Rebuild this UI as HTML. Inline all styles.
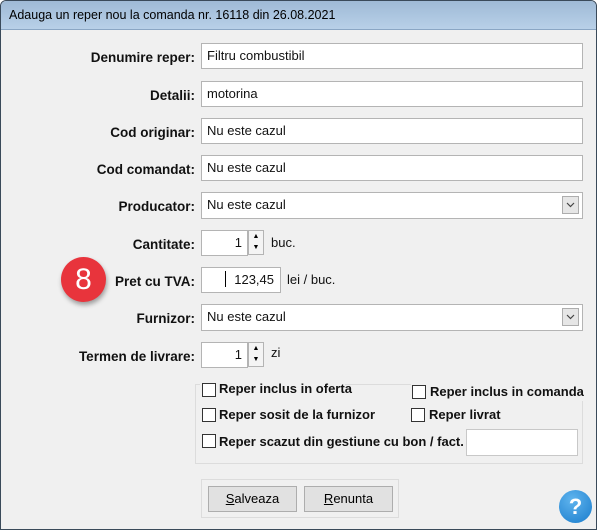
<!DOCTYPE html>
<html><head><style>
body{margin:0;width:600px;height:531px;background:#fff;font-family:"Liberation Sans",Arial,sans-serif;font-size:12px;position:relative;overflow:hidden}
.win{position:absolute;left:0;top:0;width:597px;height:530px;border:1px solid #3a4a5a;border-radius:6px 6px 0 0;background:#f0f0f0;box-sizing:border-box;overflow:hidden}
.title{position:absolute;left:0;top:0;right:0;height:28px;background:linear-gradient(#9fbad6,#b8d0e8);border-bottom:1px solid #8aa6c4}
.title span{position:absolute;left:8px;top:7px;font-size:12.5px;color:#000}
.a{position:absolute}
.lbl{position:absolute;right:401px;font-weight:bold;font-size:13.5px;color:#111;white-space:nowrap}
.in{position:absolute;background:#fff;border:1px solid #b4b4b4;box-sizing:border-box;font-size:13px;padding:4px 0 0 5px;color:#111}
.dd{position:absolute;right:3px;top:3px;width:17px;height:18px;border:1px solid #adadad;background:#e6e6e6;box-sizing:border-box}
.spin{position:absolute;width:16px;height:25px;border:1px solid #b4b4b4;background:#f4f4f4;box-sizing:border-box;font-size:7px;text-align:center;line-height:11px}
.cb{position:absolute;width:12px;height:12px;border:1px solid #333;background:#fff}
.ct{position:absolute;font-weight:bold;font-size:13px;color:#111;white-space:nowrap}
.btn{position:absolute;width:89px;height:26px;border:1px solid #adadad;background:#e1e1e1;box-sizing:border-box;text-align:center;line-height:24px;font-size:13px}
</style></head><body>
<div class="win">
<div class="title"><span>Adauga un reper nou la comanda nr. 16118 din 26.08.2021</span></div>

<div class="lbl" style="top:49px">Denumire reper:</div>
<div class="in" style="left:200px;top:42px;width:382px;height:26px">Filtru combustibil</div>
<div class="lbl" style="top:87px">Detalii:</div>
<div class="in" style="left:200px;top:80px;width:382px;height:26px">motorina</div>
<div class="lbl" style="top:124px">Cod originar:</div>
<div class="in" style="left:200px;top:117px;width:382px;height:26px">Nu este cazul</div>
<div class="lbl" style="top:161px">Cod comandat:</div>
<div class="in" style="left:200px;top:154px;width:382px;height:26px">Nu este cazul</div>
<div class="lbl" style="top:198px">Producator:</div>
<div class="in" style="left:200px;top:191px;width:382px;height:27px">Nu este cazul<div class="dd"><svg width="15" height="16"><path d="M4 6l3.5 3.5L11 6" stroke="#444" fill="none" stroke-width="1.2"/></svg></div></div>
<div class="lbl" style="top:236px">Cantitate:</div>
<div class="in" style="left:200px;top:229px;width:47px;height:26px;text-align:right;padding-right:5px">1</div>
<div class="spin" style="left:247px;top:229px">▲<br>▼</div>
<div class="ct" style="left:270px;top:234px;font-weight:normal">buc.</div>
<div class="lbl" style="top:273px">Pret cu TVA:</div>
<div class="in" style="left:200px;top:266px;width:80px;height:26px;text-align:right;padding-right:6px">123,45</div>
<div class="a" style="left:224px;top:270px;width:1px;height:16px;background:#000"></div>
<div class="ct" style="left:286px;top:271px;font-weight:normal">lei / buc.</div>
<div class="lbl" style="top:310px">Furnizor:</div>
<div class="in" style="left:200px;top:303px;width:382px;height:27px">Nu este cazul<div class="dd"><svg width="15" height="16"><path d="M4 6l3.5 3.5L11 6" stroke="#444" fill="none" stroke-width="1.2"/></svg></div></div>
<div class="lbl" style="top:348px">Termen de livrare:</div>
<div class="in" style="left:200px;top:341px;width:47px;height:26px;text-align:right;padding-right:5px">1</div>
<div class="spin" style="left:247px;top:341px">▲<br>▼</div>
<div class="ct" style="left:270px;top:344px;font-weight:normal">zi</div>

<div class="a" style="left:194px;top:383px;width:388px;height:80px;border:1px solid #dcdcdc;box-sizing:border-box"></div>
<div class="a" style="left:199px;top:378px;width:145px;height:14px;background:#f0f0f0"></div>
<div class="cb" style="left:201px;top:382px"></div><div class="ct" style="left:218px;top:380px">Reper inclus in oferta</div>
<div class="a" style="left:410px;top:380px;width:174px;height:20px;background:#f0f0f0"></div>
<div class="cb" style="left:411px;top:384px"></div><div class="ct" style="left:429px;top:383px">Reper inclus in comanda</div>
<div class="cb" style="left:201px;top:407px"></div><div class="ct" style="left:218px;top:406px">Reper sosit de la furnizor</div>
<div class="cb" style="left:410px;top:407px"></div><div class="ct" style="left:428px;top:406px">Reper livrat</div>
<div class="cb" style="left:201px;top:433px"></div><div class="ct" style="left:218px;top:433px">Reper scazut din gestiune cu bon / fact.</div>
<div class="in" style="left:465px;top:428px;width:112px;height:27px;border-color:#c8c8c8"></div>

<div class="a" style="left:200px;top:478px;width:198px;height:39px;border:1px solid #dcdcdc;box-sizing:border-box"></div>
<div class="btn" style="left:207px;top:485px"><u>S</u>alveaza</div>
<div class="btn" style="left:303px;top:485px"><u>R</u>enunta</div>

<div class="a" style="left:558px;top:489px;width:33px;height:33px;border-radius:50%;background:radial-gradient(circle at 40% 30%,#5fb4ee,#1a7ccc);color:#fff;font-weight:bold;font-size:22px;text-align:center;line-height:33px">?</div>
</div>
<div class="a" style="left:61px;top:257px;width:45px;height:45px;border-radius:50%;background:#e8343c;box-shadow:1px 3px 5px rgba(0,0,0,.35);color:#fff;font-size:30px;text-align:center;line-height:45px">8</div>
</body></html>
